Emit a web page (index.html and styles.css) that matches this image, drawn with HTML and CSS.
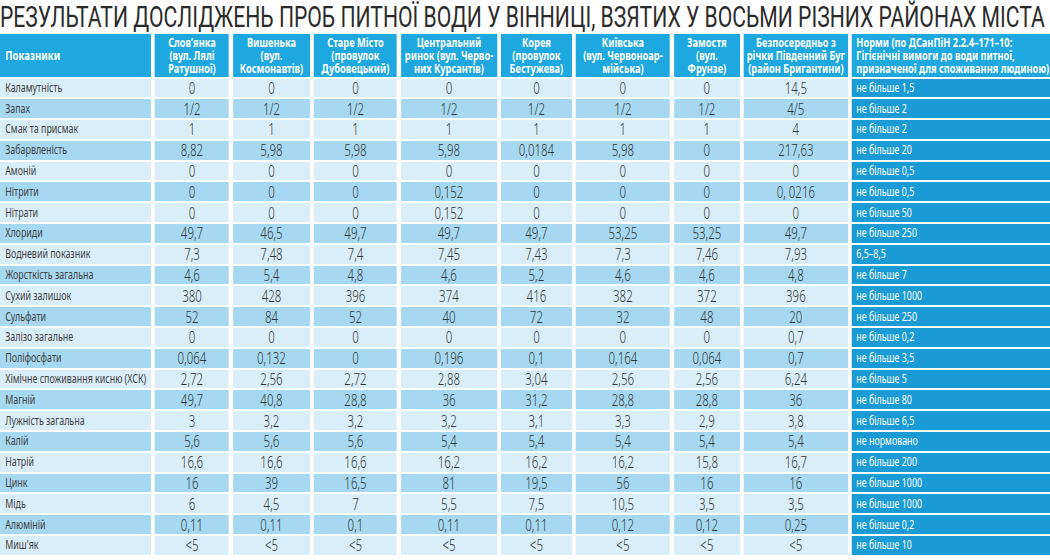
FILE: index.html
```html
<!DOCTYPE html>
<html lang="uk">
<head>
<meta charset="utf-8">
<title>Результати досліджень проб питної води</title>
<link rel="stylesheet" href="styles.css">
</head>
<body>
<h1 class="title"><span class="title-text">РЕЗУЛЬТАТИ ДОСЛІДЖЕНЬ ПРОБ ПИТНОЇ ВОДИ У ВІННИЦІ, ВЗЯТИХ У ВОСЬМИ РІЗНИХ РАЙОНАХ МІСТА</span></h1>
<div class="table">
  <div class="row head">
    <div class="cell label">Показники</div>
    <div class="cell">Слов’янка<br>(вул. Лялі<br>Ратушної)</div>
    <div class="cell">Вишенька<br>(вул.<br>Космонавтів)</div>
    <div class="cell">Старе Місто<br>(провулок<br>Дубовецький)</div>
    <div class="cell">Центральний<br>ринок (вул. Черво-<br>них Курсантів)</div>
    <div class="cell">Корея<br>(провулок<br>Бестужева)</div>
    <div class="cell">Київська<br>(вул. Червоноар-<br>мійська)</div>
    <div class="cell">Замостя<br>(вул.<br>Фрунзе)</div>
    <div class="cell">Безпосередньо з<br>річки Південний Буг<br>(район Бригантини)</div>
    <div class="cell norm">Норми (по ДСанПіН 2.2.4–171–10:<br>Гігієнічні вимоги до води питної,<br>призначеної для споживання людиною)</div>
  </div>
  <div class="row"><div class="cell label">Каламутність</div><div class="cell">0</div><div class="cell">0</div><div class="cell">0</div><div class="cell">0</div><div class="cell">0</div><div class="cell">0</div><div class="cell">0</div><div class="cell">14,5</div><div class="cell norm">не більше 1,5</div></div>
  <div class="row alt"><div class="cell label">Запах</div><div class="cell">1/2</div><div class="cell">1/2</div><div class="cell">1/2</div><div class="cell">1/2</div><div class="cell">1/2</div><div class="cell">1/2</div><div class="cell">1/2</div><div class="cell">4/5</div><div class="cell norm">не більше 2</div></div>
  <div class="row"><div class="cell label">Смак та присмак</div><div class="cell">1</div><div class="cell">1</div><div class="cell">1</div><div class="cell">1</div><div class="cell">1</div><div class="cell">1</div><div class="cell">1</div><div class="cell">4</div><div class="cell norm">не більше 2</div></div>
  <div class="row alt"><div class="cell label">Забарвленість</div><div class="cell">8,82</div><div class="cell">5,98</div><div class="cell">5,98</div><div class="cell">5,98</div><div class="cell">0,0184</div><div class="cell">5,98</div><div class="cell">0</div><div class="cell">217,63</div><div class="cell norm">не більше 20</div></div>
  <div class="row"><div class="cell label">Амоній</div><div class="cell">0</div><div class="cell">0</div><div class="cell">0</div><div class="cell">0</div><div class="cell">0</div><div class="cell">0</div><div class="cell">0</div><div class="cell">0</div><div class="cell norm">не більше 0,5</div></div>
  <div class="row alt"><div class="cell label">Нітрити</div><div class="cell">0</div><div class="cell">0</div><div class="cell">0</div><div class="cell">0,152</div><div class="cell">0</div><div class="cell">0</div><div class="cell">0</div><div class="cell">0, 0216</div><div class="cell norm">не більше 0,5</div></div>
  <div class="row"><div class="cell label">Нітрати</div><div class="cell">0</div><div class="cell">0</div><div class="cell">0</div><div class="cell">0,152</div><div class="cell">0</div><div class="cell">0</div><div class="cell">0</div><div class="cell">0</div><div class="cell norm">не більше 50</div></div>
  <div class="row alt"><div class="cell label">Хлориди</div><div class="cell">49,7</div><div class="cell">46,5</div><div class="cell">49,7</div><div class="cell">49,7</div><div class="cell">49,7</div><div class="cell">53,25</div><div class="cell">53,25</div><div class="cell">49,7</div><div class="cell norm">не більше 250</div></div>
  <div class="row"><div class="cell label">Водневий показник</div><div class="cell">7,3</div><div class="cell">7,48</div><div class="cell">7,4</div><div class="cell">7,45</div><div class="cell">7,43</div><div class="cell">7,3</div><div class="cell">7,46</div><div class="cell">7,93</div><div class="cell norm">6,5–8,5</div></div>
  <div class="row alt"><div class="cell label">Жорсткість загальна</div><div class="cell">4,6</div><div class="cell">5,4</div><div class="cell">4,8</div><div class="cell">4,6</div><div class="cell">5,2</div><div class="cell">4,6</div><div class="cell">4,6</div><div class="cell">4,8</div><div class="cell norm">не більше 7</div></div>
  <div class="row"><div class="cell label">Сухий залишок</div><div class="cell">380</div><div class="cell">428</div><div class="cell">396</div><div class="cell">374</div><div class="cell">416</div><div class="cell">382</div><div class="cell">372</div><div class="cell">396</div><div class="cell norm">не більше 1000</div></div>
  <div class="row alt"><div class="cell label">Сульфати</div><div class="cell">52</div><div class="cell">84</div><div class="cell">52</div><div class="cell">40</div><div class="cell">72</div><div class="cell">32</div><div class="cell">48</div><div class="cell">20</div><div class="cell norm">не більше 250</div></div>
  <div class="row"><div class="cell label">Залізо загальне</div><div class="cell">0</div><div class="cell">0</div><div class="cell">0</div><div class="cell">0</div><div class="cell">0</div><div class="cell">0</div><div class="cell">0</div><div class="cell">0,7</div><div class="cell norm">не більше 0,2</div></div>
  <div class="row alt"><div class="cell label">Поліфосфати</div><div class="cell">0,064</div><div class="cell">0,132</div><div class="cell">0</div><div class="cell">0,196</div><div class="cell">0,1</div><div class="cell">0,164</div><div class="cell">0,064</div><div class="cell">0,7</div><div class="cell norm">не більше 3,5</div></div>
  <div class="row"><div class="cell label">Хімічне споживання кисню (ХСК)</div><div class="cell">2,72</div><div class="cell">2,56</div><div class="cell">2,72</div><div class="cell">2,88</div><div class="cell">3,04</div><div class="cell">2,56</div><div class="cell">2,56</div><div class="cell">6,24</div><div class="cell norm">не більше 5</div></div>
  <div class="row alt"><div class="cell label">Магній</div><div class="cell">49,7</div><div class="cell">40,8</div><div class="cell">28,8</div><div class="cell">36</div><div class="cell">31,2</div><div class="cell">28,8</div><div class="cell">28,8</div><div class="cell">36</div><div class="cell norm">не більше 80</div></div>
  <div class="row"><div class="cell label">Лужність загальна</div><div class="cell">3</div><div class="cell">3,2</div><div class="cell">3,2</div><div class="cell">3,2</div><div class="cell">3,1</div><div class="cell">3,3</div><div class="cell">2,9</div><div class="cell">3,8</div><div class="cell norm">не більше 6,5</div></div>
  <div class="row alt"><div class="cell label">Калій</div><div class="cell">5,6</div><div class="cell">5,6</div><div class="cell">5,6</div><div class="cell">5,4</div><div class="cell">5,4</div><div class="cell">5,4</div><div class="cell">5,4</div><div class="cell">5,4</div><div class="cell norm">не нормовано</div></div>
  <div class="row"><div class="cell label">Натрій</div><div class="cell">16,6</div><div class="cell">16,6</div><div class="cell">16,6</div><div class="cell">16,2</div><div class="cell">16,2</div><div class="cell">16,2</div><div class="cell">15,8</div><div class="cell">16,7</div><div class="cell norm">не більше 200</div></div>
  <div class="row alt"><div class="cell label">Цинк</div><div class="cell">16</div><div class="cell">39</div><div class="cell">16,5</div><div class="cell">81</div><div class="cell">19,5</div><div class="cell">56</div><div class="cell">16</div><div class="cell">16</div><div class="cell norm">не більше 1000</div></div>
  <div class="row"><div class="cell label">Мідь</div><div class="cell">6</div><div class="cell">4,5</div><div class="cell">7</div><div class="cell">5,5</div><div class="cell">7,5</div><div class="cell">10,5</div><div class="cell">3,5</div><div class="cell">3,5</div><div class="cell norm">не більше 1000</div></div>
  <div class="row alt"><div class="cell label">Алюміній</div><div class="cell">0,11</div><div class="cell">0,11</div><div class="cell">0,1</div><div class="cell">0,11</div><div class="cell">0,11</div><div class="cell">0,12</div><div class="cell">0,12</div><div class="cell">0,25</div><div class="cell norm">не більше 0,2</div></div>
  <div class="row"><div class="cell label">Миш'як</div><div class="cell">&lt;5</div><div class="cell">&lt;5</div><div class="cell">&lt;5</div><div class="cell">&lt;5</div><div class="cell">&lt;5</div><div class="cell">&lt;5</div><div class="cell">&lt;5</div><div class="cell">&lt;5</div><div class="cell norm">не більше 10</div></div>
</div>
</body>
</html>
```
FILE: styles.css
```css
html, body {
  margin: 0;
  padding: 0;
  background: #ffffff;
}
body {
  width: 1050px;
  height: 560px;
  overflow: hidden;
  font-family: "Noto Sans", "DejaVu Sans", sans-serif;
  color: #3a3a3a;
}
.title {
  margin: 0;
  height: 34px;
  overflow: hidden;
  font-family: Roboto, "Liberation Sans", sans-serif;
  font-weight: 400;
  font-size: 30px;
  line-height: 34px;
  color: #2b2b2b;
  white-space: nowrap;
}
.title-text {
  display: inline-block;
  transform: scaleX(0.705);
  transform-origin: 0 50%;
}
/* The table is laid out at 1/0.74 width and condensed horizontally,
   to reproduce the condensed typeface of the original. */
.table {
  width: 1418.9px;
  display: flex;
  flex-direction: column;
  gap: 2px;
  transform: scaleX(0.74);
  transform-origin: 0 0;
}
.row {
  display: grid;
  grid-template-columns: 204.05px 100px 104.05px 112.16px 129.73px 95.95px 127.03px 89.19px 140.54px 1fr;
  column-gap: 5.405px;
  height: 18.8px;
}
.row.head {
  height: 42.5px;
}
.cell {
  display: flex;
  align-items: center;
  justify-content: center;
  background: #d9eef9;
  font-size: 15.5px;
  line-height: 16px;
  font-weight: 300;
  color: #333333;
  white-space: nowrap;
}
.row.alt .cell {
  background: #a6d8f2;
}
.cell.label {
  justify-content: flex-start;
  padding-left: 7px;
  font-size: 12px;
  font-weight: 400;
  color: #404040;
}
.cell.norm,
.row.alt .cell.norm {
  justify-content: flex-start;
  padding-left: 6px;
  background: #1b9bd6;
  color: #ffffff;
  font-size: 12px;
  font-weight: 400;
}
.row.head .cell {
  background: #1ea8df;
  color: #ffffff;
  font-weight: 700;
  font-size: 12.5px;
  line-height: 13px;
  text-align: center;
}
.row.head .cell.label {
  font-size: 13px;
  padding-left: 7px;
}
.row.head .cell.norm {
  text-align: left;
  justify-content: flex-start;
  padding-left: 6px;
}
```
